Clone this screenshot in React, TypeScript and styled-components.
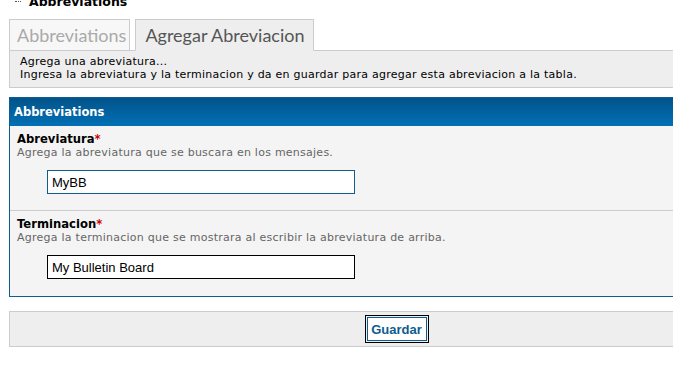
import React from "react";
import styled, { createGlobalStyle } from "styled-components";

const Global = createGlobalStyle`
  html, body { margin: 0; padding: 0; background: #fff; overflow: hidden; }
  body { font-family: "DejaVu Sans", Verdana, sans-serif; font-size: 11px; color: #000; }
`;

const Page = styled.div`
  width: 775px;
  padding-left: 9px;
`;

const Crumb = styled.div`
  display: flex;
  align-items: flex-start;
  gap: 8px;
  height: 19px;
  padding-left: 6px;
`;

const Dots = styled.span`
  width: 6px;
  height: 1px;
  border-bottom: 1px dotted #555;
`;

const Title = styled.h2`
  margin: 0;
  font-size: 12.5px;
  font-weight: bold;
  line-height: 19px;
  transform: translateY(-8px);
`;

const Tabs = styled.ul`
  display: flex;
  gap: 5px;
  list-style: none;
  margin: 0;
  padding: 0;
  height: 32px;
  position: relative;
  z-index: 1;
`;

const Tab = styled.li<{ $active?: boolean }>`
  font-family: Lato, "Open Sans", sans-serif;
  font-size: 18px;
  line-height: 31px;
  padding: 0 ${(p) => (p.$active ? "8px" : "3px")} 0 ${(p) => (p.$active ? "9px" : "7px")};
  border: 1px solid #ccc;
  border-bottom: ${(p) => (p.$active ? "1px solid #eee" : "1px solid #ccc")};
  background: ${(p) => (p.$active ? "#eee" : "#f7f7f7")};
  color: ${(p) => (p.$active ? "#555" : "#aaa")};
`;

const Info = styled.div`
  margin-top: -1px;
  border: 1px solid #ccc;
  background: #eee;
  padding: 5px 10px 6px;
  line-height: 12.5px;
  letter-spacing: 0.25px;
`;

const Form = styled.div`
  margin-top: 9px;
  border: 1px solid #0f5c8e;
`;

const FormHead = styled.div`
  height: 28px;
  line-height: 28px;
  padding-left: 4px;
  color: #fff;
  font-weight: bold;
  font-size: 11.5px;
  background: linear-gradient(#02538a, #0270b5);
`;

const Row = styled.div<{ $last?: boolean }>`
  background: #f4f4f4;
  padding: 6px 7px ${(p) => (p.$last ? "17px" : "16px")};
  border-bottom: ${(p) => (p.$last ? "none" : "1px solid #ccc")};
`;

const Label = styled.div`
  font-weight: bold;
  font-size: 11.6px;
  line-height: 14px;
`;

const Req = styled.span`
  color: #c00;
`;

const Desc = styled.div`
  color: #666;
  line-height: 13px;
  letter-spacing: 0.25px;
`;

const Input = styled.input<{ $focus?: boolean }>`
  display: block;
  box-sizing: border-box;
  margin: 11px 0 0 30px;
  width: 308px;
  height: 24px;
  padding: 0 4px;
  border: 1px solid ${(p) => (p.$focus ? "#000" : "#0f5c8e")};
  background: #fff;
  font-family: "Liberation Sans", Arial, sans-serif;
  font-size: 13px;
  color: #000;
  outline: none;
`;

const Buttons = styled.div`
  margin-top: 14px;
  border: 1px solid #ccc;
  background: #eee;
  height: 34px;
  display: flex;
  align-items: center;
  justify-content: center;
`;

const Button = styled.button`
  box-sizing: border-box;
  width: 60px;
  height: 24px;
  padding: 0;
  background: #fff;
  border: 1px solid #0f5c8e;
  outline: 1px solid #000;
  outline-offset: 1px;
  color: #0f5c8e;
  font-family: "Liberation Sans", Arial, sans-serif;
  font-weight: bold;
  font-size: 13px;
`;

export default function App() {
  return (
    <Page>
      <Global />
      <Crumb>
        <Dots />
        <Title>Abbreviations</Title>
      </Crumb>
      <Tabs>
        <Tab>Abbreviations</Tab>
        <Tab $active>Agregar Abreviacion</Tab>
      </Tabs>
      <Info>
        Agrega una abreviatura...
        <br />
        Ingresa la abreviatura y la terminacion y da en guardar para agregar esta abreviacion a la tabla.
      </Info>
      <Form>
        <FormHead>Abbreviations</FormHead>
        <Row>
          <Label>
            Abreviatura<Req>*</Req>
          </Label>
          <Desc>Agrega la abreviatura que se buscara en los mensajes.</Desc>
          <Input defaultValue="MyBB" />
        </Row>
        <Row $last>
          <Label>
            Terminacion<Req>*</Req>
          </Label>
          <Desc>Agrega la terminacion que se mostrara al escribir la abreviatura de arriba.</Desc>
          <Input $focus defaultValue="My Bulletin Board" />
        </Row>
      </Form>
      <Buttons>
        <Button>Guardar</Button>
      </Buttons>
    </Page>
  );
}
